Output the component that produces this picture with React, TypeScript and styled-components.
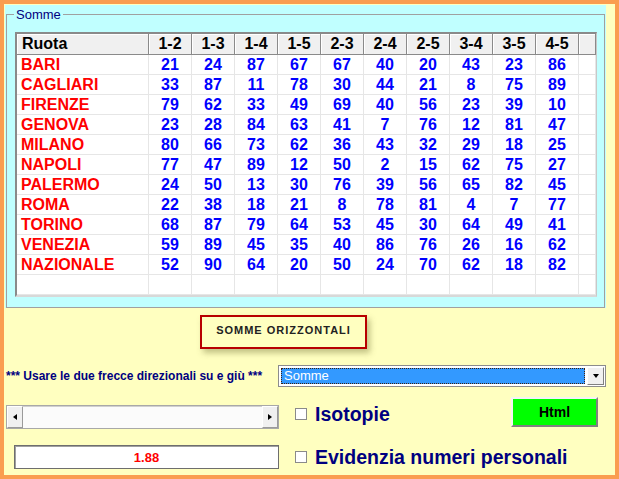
import React from "react";
import styled, { createGlobalStyle } from "styled-components";

const Global = createGlobalStyle`
  html, body { margin: 0; padding: 0; background: #ffffc0; }
  * { box-sizing: border-box; }
  body { font-family: "Liberation Sans", Arial, sans-serif; }
`;

const Window = styled.div`
  width: 619px;
  height: 479px;
  border: 4px solid #fa9d50;
  background: #ffffc0;
  display: flex;
  flex-direction: column;
  overflow: hidden;
`;

const Panel = styled.div`
  margin: 1px 0 0 1px;
  width: 601px;
  height: 303px;
  background: #c0ffff;
  padding: 2px 1px 0 1px;
`;

const Group = styled.fieldset`
  margin: 0;
  width: 599px;
  height: 301px;
  border: 1px solid #a0a0a0;
  padding: 0 7px;
  min-width: 0;
`;

const Legend = styled.legend`
  padding: 0 2px;
  font-size: 13px;
  line-height: 15px;
  color: #000080;
`;

const Grid = styled.div`
  margin: 10px 0 0 1px;
  width: 582px;
  border-style: solid;
  border-width: 2px 1px 2px 2px;
  border-color: #8a8a8a #c8c8c8 #d8d8d8 #8a8a8a;
  background: #fff;
`;

const Row = styled.div<{ $head?: boolean }>`
  display: grid;
  grid-template-columns: 132px repeat(10, 43px) 17px;
  height: ${(p) => (p.$head ? 21 : 20)}px;
`;

const HeadCell = styled.div<{ $left?: boolean }>`
  background: #f0f0f0;
  border-right: 1px solid #8a8a8a;
  border-bottom: 1px solid #8a8a8a;
  box-shadow: inset 1px 1px 0 #ffffff;
  display: flex;
  align-items: center;
  justify-content: ${(p) => (p.$left ? "flex-start" : "center")};
  padding-left: ${(p) => (p.$left ? 5 : 0)}px;
  font-size: 16px;
  font-weight: bold;
  color: #000;
`;

const Cell = styled.div<{ $name?: boolean }>`
  border-right: 1px solid #e6e6e6;
  border-bottom: 1px solid #e6e6e6;
  display: flex;
  align-items: center;
  justify-content: ${(p) => (p.$name ? "flex-start" : "center")};
  padding-left: ${(p) => (p.$name ? 4 : 0)}px;
  padding-top: 1px;
  font-size: 16px;
  font-weight: bold;
  color: ${(p) => (p.$name ? "#ff0000" : "#0000ff")};
  white-space: nowrap;
`;

const ActionButton = styled.div`
  margin: 7px 0 0 196px;
  width: 167px;
  height: 34px;
  border: 2px solid #b80000;
  box-shadow: 3px 4px 6px rgba(120, 120, 60, 0.45);
  padding-top: 7px;
  text-align: center;
  font-size: 11px;
  line-height: 13px;
  font-weight: bold;
  letter-spacing: 1px;
  color: #222;
`;

const SelectRow = styled.div`
  margin-top: 16px;
  height: 22px;
  display: flex;
  align-items: center;
  justify-content: space-between;
  padding: 0 9px 0 2px;
`;

const Hint = styled.span`
  font-size: 12px;
  font-weight: bold;
  color: #000080;
  white-space: nowrap;
`;

const Select = styled.div`
  width: 328px;
  height: 22px;
  display: flex;
  gap: 2px;
  padding: 1px;
  border: 1px solid #8c8c8c;
  background: #fff;
`;

const Selected = styled.div`
  flex: 1;
  margin: 1px 0 1px 1px;
  background: #3399ff;
  border: 1px dotted #402010;
  color: #fff;
  font-size: 13px;
  line-height: 14px;
  padding-left: 2px;
`;

const ArrowButton = styled.div`
  width: 17px;
  background: #f0f0f0;
  border: 1px solid;
  border-color: #ffffff #808080 #808080 #ffffff;
  display: flex;
  align-items: center;
  justify-content: center;
`;

const Tri = styled.span<{ $dir: "down" | "left" | "right" }>`
  width: 0;
  height: 0;
  border-style: solid;
  border-color: transparent;
  ${(p) =>
    p.$dir === "down"
      ? "border-width: 4px 3.5px 0 3.5px; border-top-color: #000;"
      : p.$dir === "left"
      ? "border-width: 3.5px 4px 3.5px 0; border-right-color: #000;"
      : "border-width: 3.5px 0 3.5px 4px; border-left-color: #000;"}
`;

const ControlRow = styled.div<{ $h: number; $mt: number }>`
  margin-top: ${(p) => p.$mt}px;
  height: ${(p) => p.$h}px;
  display: flex;
  align-items: center;
`;

const LeftCell = styled.div<{ $end?: boolean }>`
  width: 275px;
  height: 100%;
  display: flex;
  align-items: ${(p) => (p.$end ? "flex-end" : "center")};
  margin-right: 16px;
`;

const ScrollBar = styled.div`
  margin-left: 2px;
  width: 273px;
  height: 24px;
  display: flex;
  border: 1px solid #a8a8a8;
  background: #fbfbfb;
`;

const ScrollButton = styled.div`
  width: 16px;
  background: #f0f0f0;
  border: 1px solid;
  border-color: #ffffff #9a9a9a #9a9a9a #ffffff;
  display: flex;
  align-items: center;
  justify-content: center;
`;

const Track = styled.div`
  flex: 1;
  border-top: 1px solid #d0d0d0;
`;

const ValueBox = styled.div`
  margin-left: 10px;
  width: 265px;
  height: 24px;
  border: 1px solid #6e6e6e;
  box-shadow: inset 1px 1px 0 #a0a0a0;
  background: #fff;
  display: flex;
  align-items: center;
  justify-content: center;
  color: #ff0000;
  font-size: 13px;
  font-weight: bold;
`;

const Check = styled.label<{ $pt?: number }>`
  display: flex;
  align-items: center;
  gap: 8px;
  padding-top: ${(p) => p.$pt ?? 0}px;
  align-self: center;
`;

const Box = styled.span`
  width: 12px;
  height: 12px;
  background: #fff;
  border: 1px solid #8a8a8a;
`;

const CheckLabel = styled.span`
  font-size: 19.5px;
  font-weight: bold;
  color: #000080;
  white-space: nowrap;
`;

const HtmlButton = styled.div`
  margin: 0 17px 0 auto;
  align-self: flex-start;
  width: 87px;
  height: 30px;
  background: #00ff00;
  border: 2px solid;
  border-color: #f4f4f4 #808080 #808080 #f4f4f4;
  display: flex;
  align-items: center;
  justify-content: center;
  font-size: 14px;
  font-weight: bold;
  color: #000;
`;

const heads = ["1-2", "1-3", "1-4", "1-5", "2-3", "2-4", "2-5", "3-4", "3-5", "4-5"];

const data: [string, number[]][] = [
  ["BARI", [21, 24, 87, 67, 67, 40, 20, 43, 23, 86]],
  ["CAGLIARI", [33, 87, 11, 78, 30, 44, 21, 8, 75, 89]],
  ["FIRENZE", [79, 62, 33, 49, 69, 40, 56, 23, 39, 10]],
  ["GENOVA", [23, 28, 84, 63, 41, 7, 76, 12, 81, 47]],
  ["MILANO", [80, 66, 73, 62, 36, 43, 32, 29, 18, 25]],
  ["NAPOLI", [77, 47, 89, 12, 50, 2, 15, 62, 75, 27]],
  ["PALERMO", [24, 50, 13, 30, 76, 39, 56, 65, 82, 45]],
  ["ROMA", [22, 38, 18, 21, 8, 78, 81, 4, 7, 77]],
  ["TORINO", [68, 87, 79, 64, 53, 45, 30, 64, 49, 41]],
  ["VENEZIA", [59, 89, 45, 35, 40, 86, 76, 26, 16, 62]],
  ["NAZIONALE", [52, 90, 64, 20, 50, 24, 70, 62, 18, 82]],
];

export default function App() {
  return (
    <>
      <Global />
      <Window>
        <Panel>
          <Group>
            <Legend>Somme</Legend>
            <Grid>
              <Row $head>
                <HeadCell $left>Ruota</HeadCell>
                {heads.map((h) => (
                  <HeadCell key={h}>{h}</HeadCell>
                ))}
                <HeadCell />
              </Row>
              {data.map(([name, nums]) => (
                <Row key={name}>
                  <Cell $name>{name}</Cell>
                  {nums.map((n, i) => (
                    <Cell key={i}>{n}</Cell>
                  ))}
                  <Cell />
                </Row>
              ))}
              <Row>
                <Cell $name />
                {heads.map((h) => (
                  <Cell key={h} />
                ))}
                <Cell />
              </Row>
            </Grid>
          </Group>
        </Panel>

        <ActionButton>SOMME ORIZZONTALI</ActionButton>

        <SelectRow>
          <Hint>*** Usare le due frecce direzionali su e giù ***</Hint>
          <Select>
            <Selected>Somme</Selected>
            <ArrowButton>
              <Tri $dir="down" />
            </ArrowButton>
          </Select>
        </SelectRow>

        <ControlRow $h={32} $mt={10}>
          <LeftCell $end>
            <ScrollBar>
              <ScrollButton>
                <Tri $dir="left" />
              </ScrollButton>
              <Track />
              <ScrollButton>
                <Tri $dir="right" />
              </ScrollButton>
            </ScrollBar>
          </LeftCell>
          <Check $pt={2}>
            <Box />
            <CheckLabel>Isotopie</CheckLabel>
          </Check>
          <HtmlButton>Html</HtmlButton>
        </ControlRow>

        <ControlRow $h={24} $mt={16}>
          <LeftCell>
            <ValueBox>1.88</ValueBox>
          </LeftCell>
          <Check>
            <Box />
            <CheckLabel>Evidenzia numeri personali</CheckLabel>
          </Check>
        </ControlRow>
      </Window>
    </>
  );
}
